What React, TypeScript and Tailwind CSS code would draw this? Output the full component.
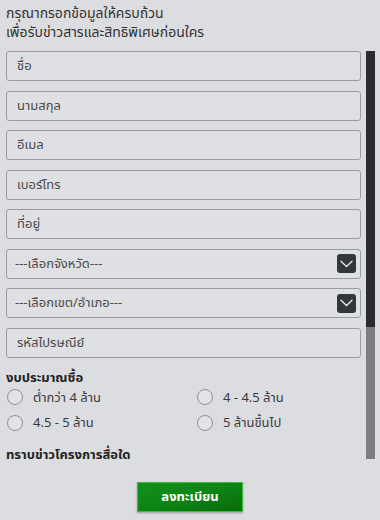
import React from "react";

const font = { fontFamily: '"Noto Sans", "Noto Sans Thai", Tahoma, "DejaVu Sans", sans-serif' };

function Field({ label }: { label: string }) {
  return (
    <div className="h-[30px] rounded-[3px] border border-[#9b9c9f] bg-[#dfe0e3] flex items-center pl-[10px] text-[13px] text-[#4a4a4a]">
      {label}
    </div>
  );
}

function SelectField({ label }: { label: string }) {
  return (
    <div className="h-[30px] rounded-[3px] border border-[#9b9c9f] bg-[#dfe0e3] flex items-center justify-between pl-[8px] pr-[4px] text-[13px] text-[#4a4a4a]">
      <span>{label}</span>
      <span className="w-[19px] h-[19px] rounded-[3px] bg-[#32373c] flex items-center justify-center">
        <svg width="13" height="8" viewBox="0 0 13 8" fill="none">
          <path d="M1 1.2 L6.5 6.5 L12 1.2" stroke="#e6e6e6" strokeWidth="1.4" strokeLinecap="round" strokeLinejoin="round" />
        </svg>
      </span>
    </div>
  );
}

function Radio({ label }: { label: string }) {
  return (
    <div className="flex items-center gap-[10px]">
      <span className="w-[16px] h-[16px] rounded-full border border-[#8f9093] bg-[#e2e3e6]" />
      <span className="text-[13px] text-[#3a3a3a]">{label}</span>
    </div>
  );
}

export default function App() {
  return (
    <div className="w-[380px] h-[520px] bg-[#dcdde0] overflow-hidden" style={font}>
      <div className="px-[6px] pt-[3px] text-[14px] leading-[19px] text-[#333]">
        <div>กรุณากรอกข้อมูลให้ครบถ้วน</div>
        <div>เพื่อรับข่าวสารและสิทธิพิเศษก่อนใคร</div>
      </div>
      <div className="flex mt-[10px]">
        <div className="w-[355px] ml-[6px] flex flex-col">
          <div className="flex flex-col gap-[9.5px]">
            <Field label="ชื่อ" />
            <Field label="นามสกุล" />
            <Field label="อีเมล" />
            <Field label="เบอร์โทร" />
            <Field label="ที่อยู่" />
            <SelectField label="---เลือกจังหวัด---" />
            <SelectField label="---เลือกเขต/อำเภอ---" />
            <Field label="รหัสไปรษณีย์" />
          </div>
          <div className="mt-[9px] text-[13px] font-bold text-[#222] leading-[20px]">งบประมาณซื้อ</div>
          <div className="grid grid-cols-[190px_1fr] gap-y-[6px] pl-[1px] mt-[1px]">
            <Radio label="ต่ำกว่า 4 ล้าน" />
            <Radio label="4 - 4.5 ล้าน" />
            <Radio label="4.5 - 5 ล้าน" />
            <Radio label="5 ล้านขึ้นไป" />
          </div>
          <div className="mt-[11px] text-[13px] font-bold text-[#222] leading-[20px]">ทราบข่าวโครงการสื่อใด</div>
        </div>
        <div className="ml-[5px] w-[9px] flex flex-col">
          <div className="h-[276px] bg-[#2b2c30]" />
          <div className="h-[132px] bg-[#7c7d82]" />
        </div>
      </div>
      <div className="flex justify-center mt-[18px]">
        <button className="w-[106px] h-[30px] border border-[#3fbf3f] bg-gradient-to-br from-[#12901a] via-[#0e8414] to-[#086a0c] text-white font-bold text-[13px] shadow-[0_1px_2px_rgba(0,0,0,0.3)]">
          ลงทะเบียน
        </button>
      </div>
    </div>
  );
}
